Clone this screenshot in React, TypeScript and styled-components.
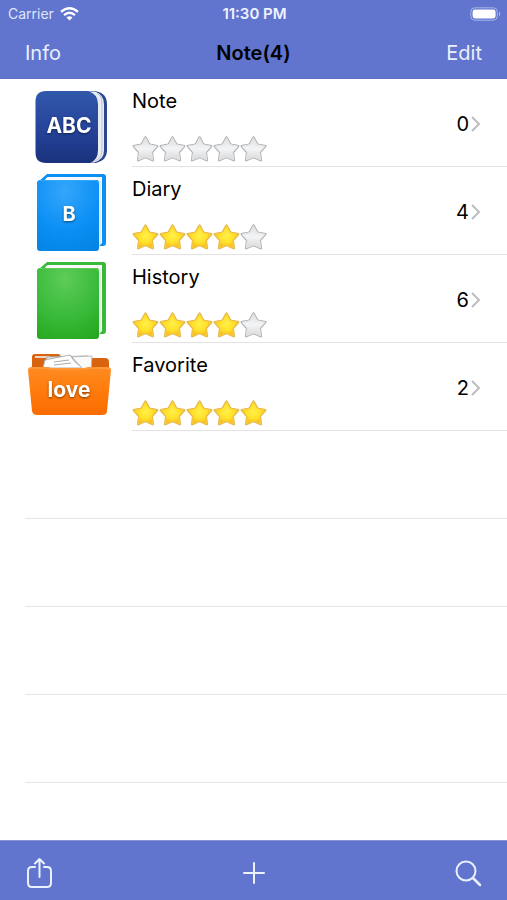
import React from "react";
import styled, { createGlobalStyle } from "styled-components";

const GlobalStyle = createGlobalStyle`
  *, *::before, *::after { box-sizing: border-box; }
  body {
    margin: 0;
    background: #fff;
    color: #000;
    font-family: Inter, "Liberation Sans", sans-serif;
  }
  button { font: inherit; }
`;

const Screen = styled.div`
  display: flex;
  flex-direction: column;
  height: 100vh;
`;

const Header = styled.header`
  flex: none;
  background: #6175ce;
  border-bottom: 1px solid #5f70c0;
`;

const StatusBar = styled.div`
  display: grid;
  grid-template-columns: 1fr auto 1fr;
  align-items: center;
  height: 26px;
  padding: 2px 6px 0 8px;
  color: #eef2ff;
  font-size: 14px;
  line-height: 20px;
`;

const Carrier = styled.span`
  display: flex;
  align-items: center;
  gap: 6px;
  color: #dfe6fb;
`;

const Clock = styled.time`
  font-size: 15px;
  font-weight: 600;
`;

const Battery = styled.svg`
  justify-self: end;
`;

const NavBar = styled.nav`
  display: grid;
  grid-template-columns: 1fr auto 1fr;
  align-items: center;
  height: 52px;
  padding: 1px 25px 0;
`;

const TextButton = styled.button<{ $end?: boolean }>`
  justify-self: ${(p) => (p.$end ? "end" : "start")};
  padding: 0;
  border: 0;
  background: none;
  color: #eaf0ff;
  font-size: 20px;
  line-height: 28px;
`;

const Title = styled.h1`
  margin: 0;
  font-size: 20px;
  font-weight: 600;
  line-height: 28px;
`;

const List = styled.ul`
  flex: 1;
  min-height: 0;
  margin: 0;
  padding: 0;
  overflow: hidden;
  list-style: none;
`;

const Item = styled.li`
  display: flex;
`;

const RowButton = styled.button`
  display: flex;
  flex: 1;
  height: 88px;
  padding: 0 0 0 20px;
  border: 0;
  background: none;
  color: #000;
  text-align: left;
`;

const EmptyRow = styled.li`
  height: 88px;
  margin-left: 25px;
  border-bottom: 1px solid #e6e6e8;
`;

const Cover = styled.svg`
  flex: none;
  margin-right: 12px;
`;

const RowBody = styled.span`
  display: flex;
  flex: 1;
  align-items: center;
  justify-content: space-between;
  height: 88px;
  padding: 2px 26px 0 0;
  border-bottom: 1px solid #e2e2e4;
`;

const Details = styled.span`
  display: flex;
  flex-direction: column;
  gap: 20px;
  padding-top: 2px;
`;

const Name = styled.span`
  font-size: 20px;
  line-height: 28px;
`;

const Stars = styled.span`
  display: flex;
`;

const Count = styled.span`
  display: flex;
  align-items: center;
  gap: 2px;
  font-size: 20px;
  line-height: 28px;
`;

const Toolbar = styled.footer`
  display: grid;
  flex: none;
  grid-template-columns: 1fr auto 1fr;
  align-items: center;
  height: 60px;
  padding: 5px 25px 0;
  background: #6175ce;
  border-top: 1px solid #8896d6;
`;

const IconButton = styled.button<{ $end?: boolean }>`
  display: flex;
  justify-self: ${(p) => (p.$end ? "end" : "start")};
  padding: 0;
  border: 0;
  background: none;
  color: #eaf2ff;
`;

const CoverLabel = styled.text`
  fill: #fff;
  font-family: Inter, "Liberation Sans", sans-serif;
  font-weight: 700;
  text-anchor: middle;
  filter: drop-shadow(0 1px 1px rgba(0, 0, 0, 0.5));
`;

function WordBook() {
  return (
    <Cover width="100" height="88" viewBox="0 0 100 88" aria-hidden="true">
      <defs>
        <linearGradient id="navy" x1="0" y1="0" x2="0" y2="1">
          <stop offset="0" stopColor="#3258aa" />
          <stop offset="0.5" stopColor="#25459c" />
          <stop offset="1" stopColor="#1b327c" />
        </linearGradient>
      </defs>
      <path d="M26 12h49q12 2 12 13v47q0 9-11 12H26Z" fill="#2b4690" />
      <path d="M68 12.500h7q9 3 9 13v46q0 9-10 12h-9Z" fill="#e9edf0" />
      <path d="M77 14q5 3 5 11v46q0 8-7 11" fill="none" stroke="#b8c3cf" strokeWidth="1" />
      <path d="M26 12h42q10 3 10 13v46q0 10-8 13H26q-10.500 0-10.500-10.500V22.500Q15.500 12 26 12Z" fill="url(#navy)" />
      <CoverLabel x="49" y="54" fontSize="21">ABC</CoverLabel>
    </Cover>
  );
}

const bookTones = {
  blue: ["#35a6fb", "#0b8ff5", "#0384e2"],
  green: ["#5dcc59", "#38b938", "#27a820"],
};

function Book({ tone, label }: { tone: "blue" | "green"; label?: string }) {
  const [light, base, dark] = bookTones[tone];
  return (
    <Cover width="100" height="88" viewBox="0 0 100 88" aria-hidden="true">
      <defs>
        <radialGradient id={tone} cx="0.45" cy="0.15" r="0.95">
          <stop offset="0" stopColor={light} />
          <stop offset="0.6" stopColor={base} />
          <stop offset="1" stopColor={dark} />
        </radialGradient>
      </defs>
      <path d="M18 15 27 7h56q3 0 3 3v66q0 3-3 3h-5V15Z" fill={base} />
      <path d="M25 13q1-3 4-3h53v66l-4 4V13Z" fill="#f7f8f7" />
      <path d="M80 14v63" fill="none" stroke="#d5dbd8" strokeWidth="1" />
      <path d="M17 15q1-2 3-2h56q3 0 3 3v65q0 3-3 3H20q-3 0-3-3Z" fill={`url(#${tone})`} />
      <path d="M20 13.500h55q3 0 3 3" fill="none" stroke={light} strokeWidth="1" />
      {label && <CoverLabel x="49" y="54" fontSize="20">{label}</CoverLabel>}
    </Cover>
  );
}

function Folder() {
  return (
    <Cover width="100" height="88" viewBox="0 0 100 88" aria-hidden="true">
      <defs>
        <linearGradient id="orange" x1="0" y1="0" x2="0" y2="1">
          <stop offset="0" stopColor="#ff8c22" />
          <stop offset="0.5" stopColor="#ff7b0b" />
          <stop offset="1" stopColor="#f96c02" />
        </linearGradient>
      </defs>
      <path d="M12 28V14q0-3 3-3h23q3 0 3 4h44q4 0 4 4v10Z" fill="#d9640f" />
      <path d="M15 14h15" stroke="#eed5c4" strokeWidth="2" />
      <path d="m27 14 41-1 4 12H24Z" fill="#e9eaea" stroke="#aaa" strokeWidth="1" />
      <path d="m48 14 24-1-1 13H48Z" fill="#fafafa" stroke="#bbb" strokeWidth="1" />
      <path d="m25 17 25-5 12 13H23Z" fill="#fff" stroke="#b3b3b3" strokeWidth="1" />
      <path d="m50 12 5 7 5 4M34 19l15-2M34 22l17-2" fill="none" stroke="#aaa" strokeWidth="1" />
      <path d="M8 27q0-3 4-3h14q3 0 5 1h32q3 0 5-1h19q4 0 4 3l-4 41q0 4-5 4H17q-4 0-5-4Z" fill="url(#orange)" />
      <path d="M9 27q1-2 3-2h13q3 0 6 1h32q3 0 6-1h17q4 0 4 2" fill="none" stroke="#ffa24e" strokeWidth="1" />
      <CoverLabel x="49" y="54" fontSize="21">love</CoverLabel>
    </Cover>
  );
}

function StarDefinitions() {
  return (
    <svg width="0" height="0" aria-hidden="true">
      <defs>
        <radialGradient id="goldStar" cy="0.45">
          <stop offset="0" stopColor="#fff04a" />
          <stop offset="0.65" stopColor="#ffe026" />
          <stop offset="1" stopColor="#f8bd20" />
        </radialGradient>
        <linearGradient id="silverStar" x1="0" y1="0" x2="0" y2="1">
          <stop offset="0" stopColor="#dcdddf" />
          <stop offset="0.5" stopColor="#f3f4f5" />
          <stop offset="1" stopColor="#d6d8da" />
        </linearGradient>
      </defs>
    </svg>
  );
}

const starPath =
  "M13.5 2.5 17.3 9.600 25.200 11.200 19.800 17.100 20.800 25.200 13.500 22 6.200 25.200 7.200 17.100 1.800 11.200 9.700 9.600Z";

function Star({ filled }: { filled: boolean }) {
  return (
    <svg width="27" height="28" viewBox="0 0 27 28" aria-hidden="true">
      <path
        d={starPath}
        fill="none"
        stroke={filled ? "#deb04a" : "#a3a5a7"}
        strokeWidth="2.400"
        strokeLinejoin="round"
      />
      <path
        d={starPath}
        fill={filled ? "url(#goldStar)" : "url(#silverStar)"}
        stroke={filled ? "#fbcf3c" : "#e6e7e8"}
        strokeWidth="0.900"
        strokeLinejoin="round"
      />
    </svg>
  );
}

const notebooks = [
  { name: "Note", rating: 0, count: 0, cover: <WordBook /> },
  { name: "Diary", rating: 4, count: 4, cover: <Book tone="blue" label="B" /> },
  { name: "History", rating: 4, count: 6, cover: <Book tone="green" /> },
  { name: "Favorite", rating: 5, count: 2, cover: <Folder /> },
];

export default function App() {
  return (
    <Screen>
      <GlobalStyle />
      <Header>
        <StatusBar>
          <Carrier>
            Carrier
            <svg width="19" height="14" viewBox="0 0 19 14" aria-hidden="true">
              <g fill="none" stroke="#fff" strokeWidth="2.3">
                <path d="M1 4.8Q9.5-2.2 18 4.8" />
                <path d="M4 8.1q5.5-4.7 11 0" />
              </g>
              <path d="M6.5 10.4q3-2.4 6 0L9.5 13.5Z" fill="#fff" />
            </svg>
          </Carrier>
          <Clock>11:30 PM</Clock>
          <Battery width="31" height="14" viewBox="0 0 31 14" aria-label="Battery full">
            <rect x="0.8" y="0.8" width="26.5" height="12.4" rx="4" fill="none" stroke="#a9b5e7" />
            <rect x="2.6" y="2.6" width="23" height="8.8" rx="2.4" fill="#fff" />
            <path d="M29 4.5q2.6 2.5 0 5Z" fill="#a9b5e7" />
          </Battery>
        </StatusBar>
        <NavBar>
          <TextButton type="button">Info</TextButton>
          <Title>Note(4)</Title>
          <TextButton type="button" $end>Edit</TextButton>
        </NavBar>
      </Header>
      <List>
        {notebooks.map(({ name, rating, count, cover }) => (
          <Item key={name}>
            <RowButton type="button">
              {cover}
              <RowBody>
                <Details>
                  <Name>{name}</Name>
                  <Stars role="img" aria-label={`${rating} of 5 stars`}>
                    {[1, 2, 3, 4, 5].map((n) => (
                      <Star key={n} filled={n <= rating} />
                    ))}
                  </Stars>
                </Details>
                <Count>
                  {count}
                  <svg width="10" height="16" viewBox="0 0 10 16" aria-hidden="true">
                    <path d="m1 1 7 7-7 7" fill="none" stroke="#bdbdc0" strokeWidth="2" />
                  </svg>
                </Count>
              </RowBody>
            </RowButton>
          </Item>
        ))}
        {[1, 2, 3, 4].map((n) => (
          <EmptyRow key={n} aria-hidden="true" />
        ))}
      </List>
      <Toolbar>
        <IconButton type="button" aria-label="Share">
          <svg width="28" height="32" viewBox="0 0 28 32" fill="none" stroke="currentColor" strokeWidth="2" strokeLinecap="round" strokeLinejoin="round">
            <path d="M10 10H7Q3 10 3 14v12Q3 30 7 30h15Q26 30 26 26V14Q26 10 22 10H19" />
            <path d="M14.5 20V2M10 6.500l4.500-4.500 4.500 4.500" />
          </svg>
        </IconButton>
        <IconButton type="button" aria-label="Add">
          <svg width="22" height="22" viewBox="0 0 22 22" fill="none" stroke="currentColor" strokeWidth="2" strokeLinecap="round">
            <path d="M11 1v20M1 11h20" />
          </svg>
        </IconButton>
        <IconButton type="button" aria-label="Search" $end>
          <svg width="27" height="27" viewBox="0 0 27 27" fill="none" stroke="currentColor" strokeLinecap="round">
            <circle cx="11" cy="11" r="9.5" strokeWidth="2" />
            <path d="m18 18 7 7" strokeWidth="2.500" />
          </svg>
        </IconButton>
      </Toolbar>
      <StarDefinitions />
    </Screen>
  );
}
